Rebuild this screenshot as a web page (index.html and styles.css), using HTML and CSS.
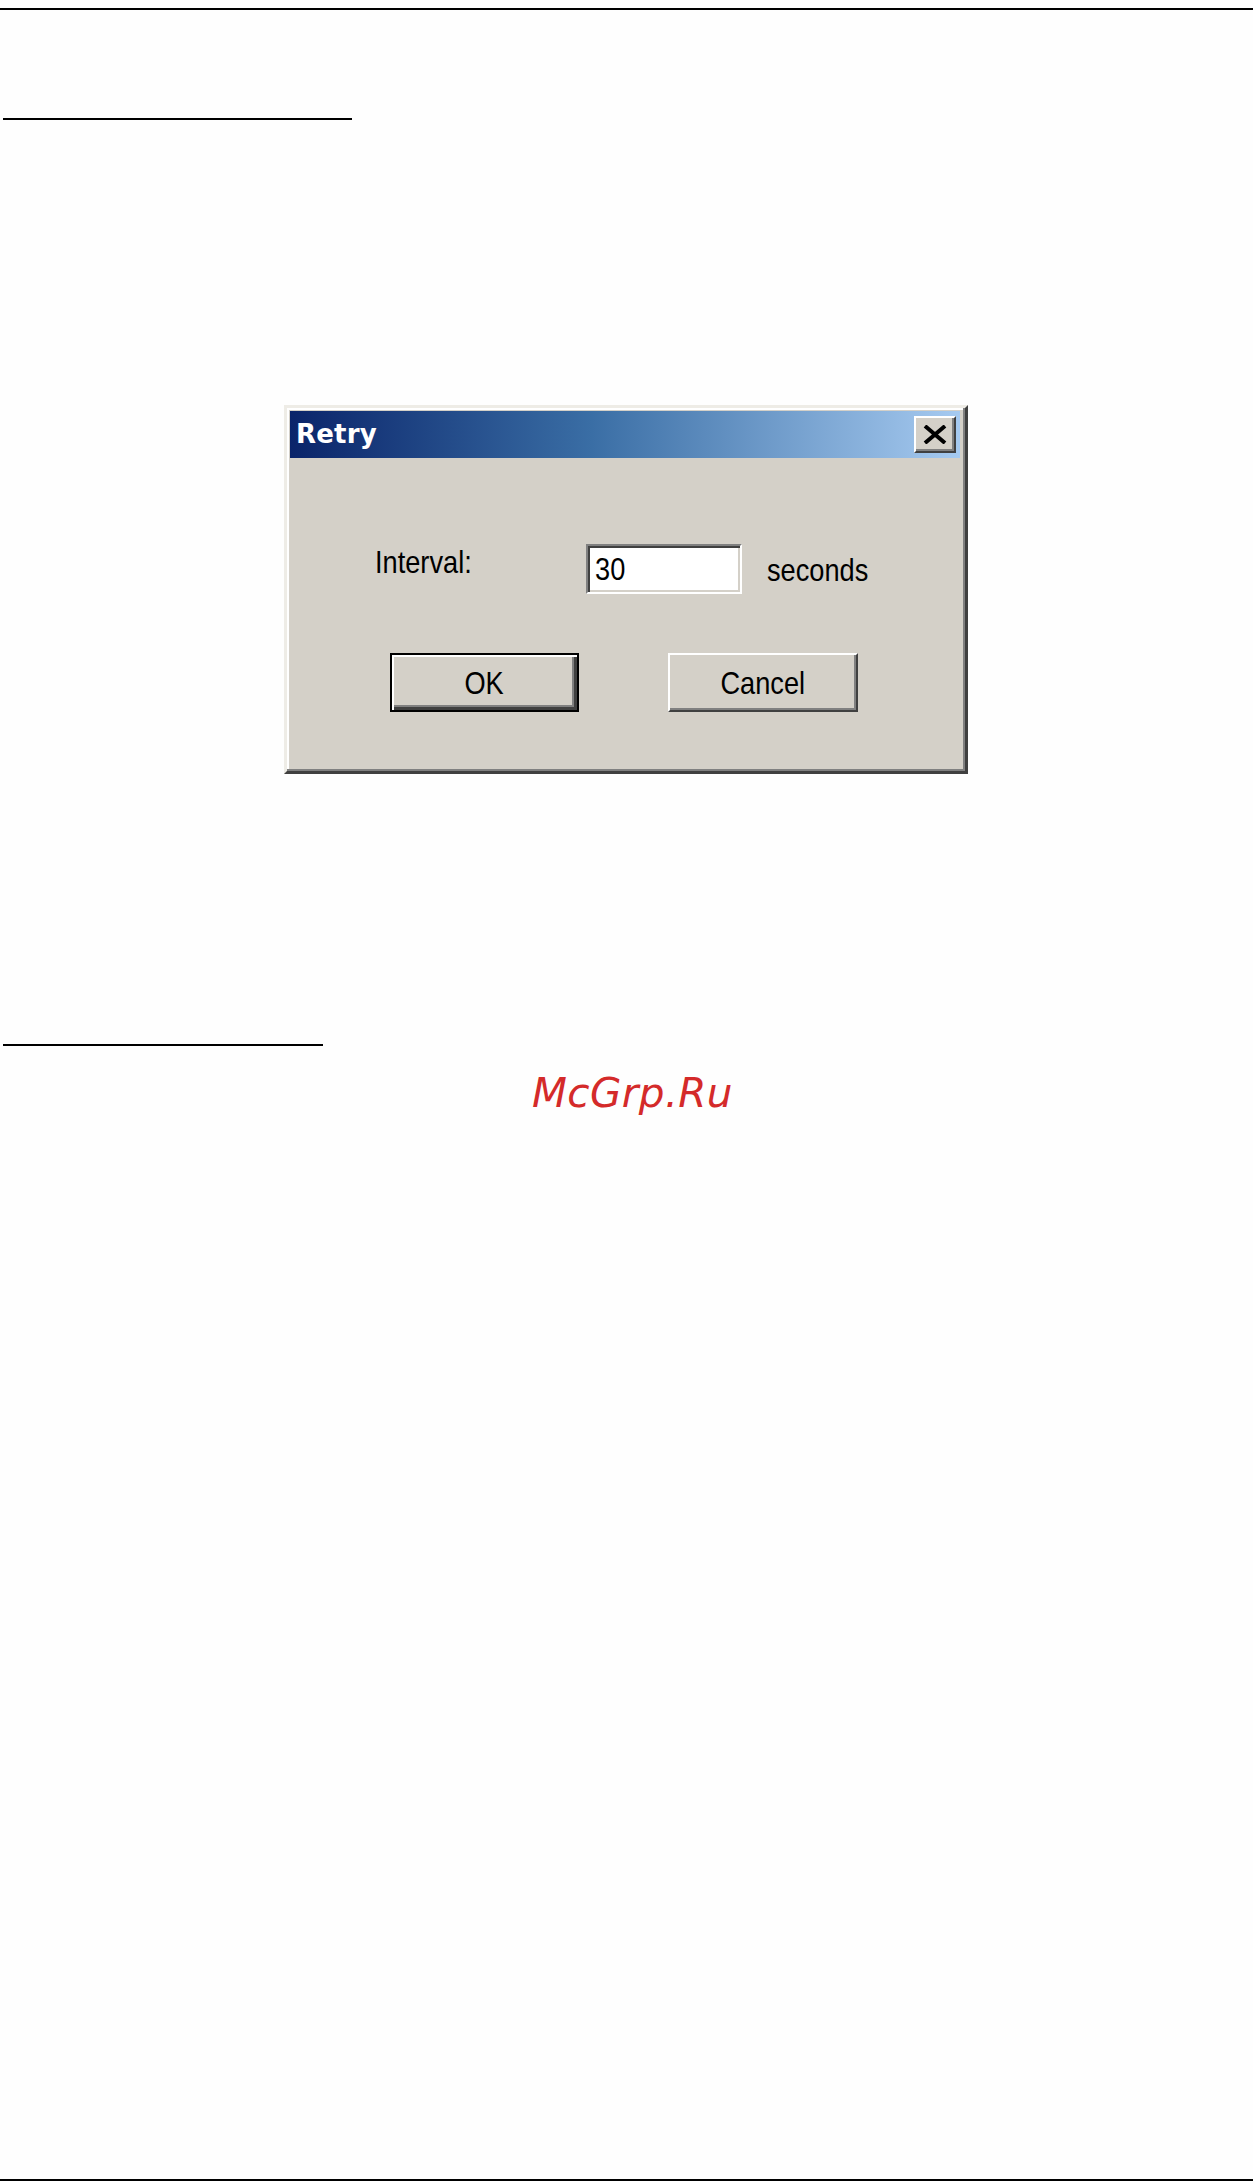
FILE: index.html
```html
<!DOCTYPE html>
<html>
<head>
<meta charset="utf-8">
<title>Retry</title>
<link rel="stylesheet" href="styles.css">
</head>
<body>
<div class="page">
  <div class="rule rule-top"></div>
  <div class="rule rule-section"></div>

  <div class="dialog">
    <div class="titlebar">
      <span class="title">Retry</span>
      <div class="close-btn">
        <svg width="24" height="19" viewBox="0 0 24 19">
          <path d="M2 1 L22 18 M22 1 L2 18" stroke="#000" stroke-width="4" fill="none"/>
        </svg>
      </div>
    </div>
    <div class="dlg-body">
      <div class="field-row">
        <div class="label"><span class="ms">Interval:</span></div>
        <div class="textbox"><span class="ms">30</span></div>
        <div class="unit"><span class="ms">seconds</span></div>
      </div>
      <div class="button-row">
        <div class="btn btn-default"><span class="ms ms-center">OK</span></div>
        <div class="btn"><span class="ms ms-center">Cancel</span></div>
      </div>
    </div>
  </div>

  <div class="rule rule-section2"></div>
  <div class="watermark">McGrp.Ru</div>

  <div class="rule rule-bottom"></div>
</div>
</body>
</html>
```

FILE: styles.css
```css
html, body {
  margin: 0;
  padding: 0;
  background: #fefefe;
}

.page {
  display: flex;
  flex-direction: column;
  height: 2181px;
  width: 1253px;
  overflow: hidden;
}

.rule {
  background: #000;
  height: 2px;
  flex: none;
}

.rule-top {
  margin-top: 8px;
  width: 1253px;
}

.rule-section {
  margin-top: 108px;
  margin-left: 3px;
  width: 349px;
}

.rule-section2 {
  margin-top: 270px;
  margin-left: 3px;
  width: 320px;
}

.rule-bottom {
  margin-top: auto;
  width: 1253px;
}

/* Dialog */
.dialog {
  flex: none;
  box-sizing: border-box;
  margin-top: 285px;
  margin-left: 284px;
  width: 684px;
  height: 369px;
  background: #d4d0c8;
  border-style: solid;
  border-width: 3px;
  border-color: #eeece6 #404040 #404040 #eeece6;
  box-shadow: inset -2px -2px 0 #808080, inset 2px 2px 0 #ffffff;
  padding: 3px 5px 3px 3px;
  font-family: "Liberation Sans", Arial, sans-serif;
  color: #000;
}

.titlebar {
  height: 47px;
  background: linear-gradient(to right, #0a246a 0%, #3a6ea5 45%, #a6caf0 100%);
  display: flex;
  align-items: center;
  justify-content: space-between;
  padding: 0 4px 0 6px;
}

.title {
  font-family: "DejaVu Sans", Verdana, sans-serif;
  font-weight: bold;
  font-size: 26px;
  line-height: 47px;
  color: #fff;
  letter-spacing: 0.2px;
}

.close-btn {
  box-sizing: border-box;
  width: 42px;
  height: 37px;
  background: #d4d0c8;
  border-style: solid;
  border-width: 2px;
  border-color: #ffffff #404040 #404040 #ffffff;
  box-shadow: inset -2px -2px 0 #808080;
  display: flex;
  align-items: center;
  justify-content: center;
  padding: 0 1px 1px 0;
}

.close-btn svg {
  display: block;
}

.dlg-body {
  display: flex;
  flex-direction: column;
}

.ms {
  display: inline-block;
  font-size: 32px;
  line-height: 36px;
  transform: scaleX(0.85);
  transform-origin: left center;
  white-space: nowrap;
}

.ms-center {
  transform-origin: center center;
}

.field-row {
  display: flex;
  align-items: flex-start;
  margin-top: 86px;
  padding-left: 85px;
  height: 50px;
}

.label {
  width: 211px;
  flex: none;
}

.textbox {
  box-sizing: border-box;
  width: 156px;
  height: 50px;
  flex: none;
  background: #fff;
  border-style: solid;
  border-width: 2px;
  border-color: #808080 #ffffff #ffffff #808080;
  box-shadow: inset 2px 2px 0 #404040, inset -2px -2px 0 #d4d0c8;
  padding: 5px 0 0 7px;
}

.unit {
  margin-left: 25px;
  padding-top: 8px;
}

.button-row {
  display: flex;
  margin-top: 59px;
  padding-left: 100px;
  gap: 89px;
}

.btn {
  box-sizing: border-box;
  width: 190px;
  height: 59px;
  background: #d4d0c8;
  border-style: solid;
  border-width: 2px;
  border-color: #ffffff #404040 #404040 #ffffff;
  box-shadow: inset -2px -2px 0 #808080;
  display: flex;
  align-items: center;
  justify-content: center;
}

.btn-default {
  width: 189px;
  border-color: #000;
  box-shadow: inset 2px 2px 0 #ffffff, inset -3px -3px 0 #404040, inset -5px -5px 0 #808080;
}

/* Watermark */
.watermark {
  flex: none;
  margin-top: 24px;
  padding-left: 532px;
  font-family: "DejaVu Sans", sans-serif;
  font-style: oblique;
  font-size: 40.5px;
  line-height: 46px;
  color: #d42a2a;
  letter-spacing: 0.4px;
}
```
